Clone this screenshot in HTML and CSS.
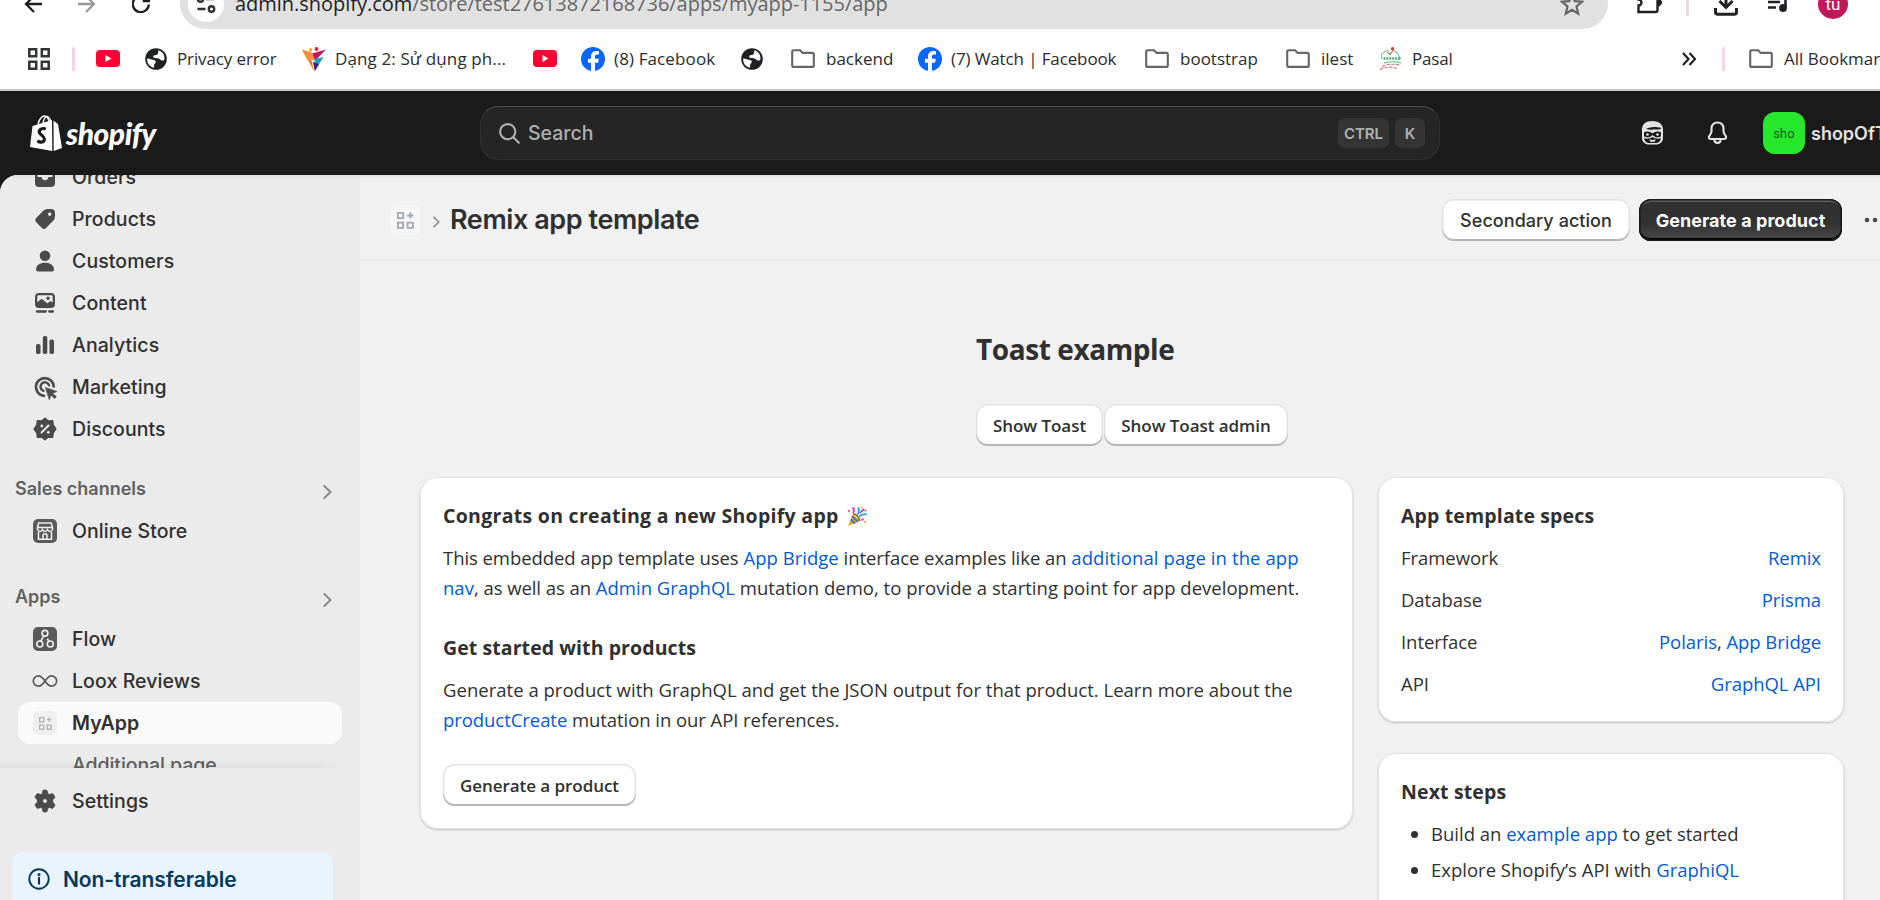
FILE: index.html
```html
<!DOCTYPE html>
<html lang="en">
<head>
<meta charset="utf-8">
<title>Remix app template</title>
<link rel="stylesheet" href="styles.css">
</head>
<body>
<svg class="defs" width="0" height="0">
  <symbol id="folder" viewBox="0 0 24 20"><path d="M2.9 1.2h6.2l2.6 2.7h9.6q1.5 0 1.500 1.500v11q0 1.500-1.500 1.500H2.700q-1.500 0-1.500-1.500V2.800q0-1.600 1.700-1.600z" fill="none" stroke="#666" stroke-width="2.100"/></symbol>
  <symbol id="youtube" viewBox="0 0 24 18"><rect width="24" height="17" rx="4" fill="#ff0033"/><path d="M9.500 5v7l6-3.500z" fill="#fff"/></symbol>
  <symbol id="facebook" viewBox="0 0 24 24"><circle cx="12" cy="12" r="12" fill="#0866ff"/><path d="M10 24v-8.200H7v-4h3V10c0-4 2-6 5.500-6 1 0 1.700.1 2.500.3v3.400c-.6-.1-1.100-.1-1.800-.1-1.600 0-2.200.7-2.200 2.200v2h3.800l-.7 4H14V24z" fill="#fff"/></symbol>
  <symbol id="globe" viewBox="0 0 22 22"><circle cx="11" cy="11" r="9.800" fill="#202124" stroke="#202124" stroke-width="2"/><path d="M2.200 10.500c2.800 0 3.800 1.500 6 1.200 2.600.3 3 2 2.200 3.300-.8.800-1.300 1-1.400 4.800C4.500 18.800 1.800 15 2.200 10.500zM13.500 2.300c3.500 1 6.200 4.500 6 8.300-.2 1.400-.7 2-1.800 2-1.500.2-2.500-1.500-4.200-2.200-1.600-.4-4 .2-5-.8-1-1.500.5-2.800 2-2.700 1.800.2 2.600-1 2.600-2.400z" fill="#fff"/></symbol>
  <symbol id="appgrid" viewBox="0 0 16 16"><path d="M.8.8h5v5h-5zM.8 10h5v5h-5zM10 10h5v5h-5zM12.500.5v5.600M9.700 3.300h5.600" fill="none" stroke="currentColor" stroke-width="1.700"/></symbol>
  <symbol id="chev" viewBox="0 0 9 14"><path d="M1.300 1 7.500 7l-6.200 6" fill="none" stroke="currentColor" stroke-width="2" stroke-linecap="round" stroke-linejoin="round"/></symbol>
</svg>

<div class="browser">
  <div class="toolbar">
    <svg class="nav-icon" viewBox="0 0 18 18"><path d="M18 9H2M10 1 2 9l8 8" fill="none" stroke="#202124" stroke-width="2.300"/></svg>
    <svg class="nav-icon nav-forward" viewBox="0 0 18 18"><path d="M0 9h16M8 1l8 8-8 8" fill="none" stroke="#9a9a9a" stroke-width="2.300"/></svg>
    <svg class="nav-icon nav-reload" viewBox="0 0 18 18"><path d="M16.800 9.500A8 8 0 1 1 14.500 3.500M17.200 0v6.200h-6.500" fill="none" stroke="#202124" stroke-width="2.300"/></svg>
    <div class="omnibox">
      <div class="site-info"><svg width="20" height="20" viewBox="0 0 20 20" fill="none" stroke="#303030" stroke-width="2.400"><circle cx="4.500" cy="5" r="2.700"/><path d="M10 5h8M1.500 15h8"/><circle cx="15.500" cy="15" r="2.700"/></svg></div>
      <div class="url"><span class="host">admin.shopify.com</span>/store/test27613872168736/apps/myapp-1155/app</div>
      <svg class="star" viewBox="0 0 24 24"><path d="m12 2.500 2.800 6.700 7.200.6-5.500 4.700 1.700 7.100-6.200-3.800-6.200 3.800 1.700-7.100L2 9.800l7.200-.6z" fill="none" stroke="#666" stroke-width="2.200"/></svg>
    </div>
    <svg class="tool-ext" viewBox="0 0 26 26"><path d="M2 4.500h6a3 3 0 0 1 6 0h6q1.500 0 1.500 1.500v5.500a3 3 0 0 1 0 6V22q0 2-2 2H2.500v-6.500a3 3 0 0 0 0-6z" fill="none" stroke="#202124" stroke-width="2.400"/><circle cx="23" cy="14.500" r="2.800" fill="#202124"/></svg>
    <span class="sep tool-sep"></span>
    <svg class="tool-dl" viewBox="0 0 24 24"><path d="M12 0v15M5.500 9l6.500 6.500L18.500 9" fill="none" stroke="#202124" stroke-width="3"/><path d="M1.500 16v4q0 2.300 2.300 2.300h16.400q2.300 0 2.300-2.300v-4" fill="none" stroke="#202124" stroke-width="3"/></svg>
    <svg class="tool-media" viewBox="0 0 22 22"><path d="M1 6.500h12M1 12h12M1 17.500h8M18.500 18V5h3" fill="none" stroke="#202124" stroke-width="2.600"/><circle cx="16" cy="18" r="3.900" fill="#202124"/></svg>
    <div class="profile">tu</div>
  </div>
  <div class="bookmarks">
    <svg class="bm-apps" viewBox="0 0 22 22"><path d="M1.300 1.300h6.900v6.900H1.300zM13.800 1.300h6.900v6.900h-6.900zM1.300 13.800h6.900v6.900H1.300zM13.800 13.800h6.900v6.900h-6.900z" fill="none" stroke="#333437" stroke-width="2.500"/></svg>
    <span class="sep bm-sep"></span>
    <svg class="bm-yt"><use href="#youtube"/></svg>
    <svg class="bm-globe"><use href="#globe"/></svg><span class="bm-text after-globe w-privacy">Privacy error</span>
    <svg class="bm-24" viewBox="0 0 24 24"><path d="M0 2.500 8 7l4 17z" fill="#f4742b"/><path d="M24 2.500 10 6.500 13 14z" fill="#c2185b"/><path d="m0 2.500 9.500 3L13 13 5.500 13z" fill="#fb8c3c"/><path d="m12.500 12 9-2-8.700 14z" fill="#1f9ec0"/><path d="m11 15 6 2-4.200 7z" fill="#4b1d6b"/><circle cx="8.500" cy="3" r="1.900" fill="#fbb03b"/><circle cx="14.500" cy="2" r="2" fill="#ee2244"/></svg><span class="bm-text w-dang">Dạng 2: Sử dụng ph...</span>
    <svg class="bm-yt flush"><use href="#youtube"/></svg>
    <svg class="bm-24 lead-24"><use href="#facebook"/></svg><span class="bm-text w-fb8">(8) Facebook</span>
    <svg class="bm-globe flush"><use href="#globe"/></svg>
    <svg class="bm-folder lead-28"><use href="#folder"/></svg><span class="bm-text after-folder w-backend">backend</span>
    <svg class="bm-24"><use href="#facebook"/></svg><span class="bm-text w-fb7">(7) Watch | Facebook</span>
    <svg class="bm-folder"><use href="#folder"/></svg><span class="bm-text after-folder w-bootstrap">bootstrap</span>
    <svg class="bm-folder"><use href="#folder"/></svg><span class="bm-text after-folder w-ilest">ilest</span>
    <svg class="bm-24" viewBox="0 0 24 24" fill="none"><path d="M2.500 12V7L8 3l3 4 3-4 4 3 4 6" stroke="#8cc5a0" stroke-width="1.200"/><path d="m8 5 3 3 3-4" stroke="#d66" stroke-width="1"/><circle cx="13.500" cy="1.800" r="1.700" fill="#e53935"/><path d="M4.500 11.500h16.500" stroke="#4dae72" stroke-width="2.600" stroke-dasharray="2 .9"/><path d="M5 16q9-2.500 17 0" stroke="#5fb880" stroke-width="1.200"/><path d="M3 19.500q8-3.500 18-1.500M1 22.500q8-4 17-1" stroke="#d08080" stroke-width="1.200" stroke-dasharray="3.500 1.200"/></svg><span class="bm-text w-pasal">Pasal</span>
    <svg class="bm-more" viewBox="0 0 14 14"><path d="m1 1 5.500 6L1 13M7.500 1 13 7l-5.500 6" fill="none" stroke="#202124" stroke-width="2.200"/></svg>
    <span class="sep all-sep"></span>
    <svg class="bm-folder lead-24"><use href="#folder"/></svg><span class="bm-text after-folder">All Bookmarks</span>
  </div>
</div>

<header class="topbar">
  <div class="logo">
    <svg width="32" height="36" viewBox="0 0 32 36"><path d="M2.500 11 22 5l.3 31L0 32z" fill="#fff"/><path d="M23.500 5.500 28 9l4 24-8.300 3z" fill="#fff"/><path d="M8 9.500C9 4 12 1 14.500 1S18.500 4 19 7M13 8C14 3 16 .8 18 1.800S20.500 5 20.800 6.500" fill="none" stroke="#fff" stroke-width="1.400"/><path d="M15.800 14.200c-3-1.600-6.600-.2-6.600 2.800 0 3.200 5.200 3.400 5.200 7 0 3.300-3.800 4.300-7 1.700" fill="none" stroke="#1a1a1a" stroke-width="3.200"/></svg>
    <span class="logo-text">shopify</span>
  </div>
  <div class="search">
    <svg width="21" height="21" viewBox="0 0 21 21"><circle cx="8.700" cy="8.700" r="7.600" fill="none" stroke="#b0b0b0" stroke-width="2.100"/><path d="m14.300 14.300 5.500 5.500" stroke="#b0b0b0" stroke-width="2.200" stroke-linecap="round"/></svg>
    <span class="search-text">Search</span>
    <kbd class="key-ctrl">CTRL</kbd><kbd class="key-k">K</kbd>
  </div>
  <svg class="mascot" viewBox="0 0 23 24"><path d="M1 11C0 3 5 0 11.500 0S23 3.500 22 11v6c0 4-3 6.500-7 6.500H8C4 23.500 1 21 1 17z" fill="#e3e3e3"/><path d="M5 7.800C7 6.500 9 6.800 11 6.200c3-.6 6-.2 9.500.8-1.500 2-5 1.700-7.500 1.200-2.500.9-5.500 1-8-.4z" fill="#1a1a1a"/><path d="M3 11.300c2.500-1.200 5.500-.9 8.500 1.200 3-2.100 6-2.400 8.500-1.200v3.600c-2.500 2.300-6 1.700-8.500-.9-2.500 2.600-6 3.200-8.500.9z" fill="#1a1a1a"/><circle cx="6.500" cy="13.500" r="1.300" fill="#e3e3e3"/><circle cx="16.500" cy="13.500" r="1.300" fill="#e3e3e3"/><path d="M3 17.300c3 .9 6 .3 8.500-1.300 2.500 1.600 5.500 2.200 8.500 1.300-.6 2.700-2 4.200-4.500 4.700h-8C5 21.500 3.600 20 3 17.300z" fill="#1a1a1a"/><path d="M8.300 18.300q3.200 1.600 6.400 0l-1 2.400H9.300z" fill="#e3e3e3"/></svg>
  <svg class="bell" viewBox="0 0 21 24"><path d="M10.500 1.500c-4 0-6 2.800-6 6v2.800c0 2-.8 2.800-1.900 4.200-1.400 1.800-.8 3.500 1 3.500h13.800c1.800 0 2.400-1.700 1-3.500-1.100-1.400-1.900-2.200-1.900-4.200V7.500c0-3.200-2-6-6-6z" fill="none" stroke="#e3e3e3" stroke-width="2.100"/><path d="M7.300 18.500c0 4.500 6.400 4.500 6.400 0" fill="none" stroke="#e3e3e3" stroke-width="2.100"/></svg>
  <div class="avatar">sho</div>
  <span class="shop-name">shopOfTu</span>
</header>

<div class="frame">
  <nav class="sidebar">
    <div class="nav-scroll">
      <div class="nav-item"><svg viewBox="0 0 30 30"><path d="M5 9q0-4 4-4h12q4 0 4 4v12q0 4-4 4H9q-4 0-4-4z" fill="#4a4a4a"/><path d="M7.500 8h15v7h-4q-.8 3.300-3.500 3.300T11.500 15h-4z" fill="#ebebeb"/></svg><span>Orders</span></div>
      <div class="nav-item"><svg viewBox="0 0 30 30"><path fill-rule="evenodd" d="M6 14.200 13.500 6.600Q15 5 17.500 5H21q4 0 4 4v3.500q0 2.500-1.600 4l-7.600 7.700q-1.800 1.600-3.600 0l-6.200-6.200q-1.700-1.900 0-3.800zM19.700 8.500a1.700 1.700 0 1 0 .01 0z" fill="#4a4a4a"/></svg><span>Products</span></div>
      <div class="nav-item"><svg viewBox="0 0 30 30" fill="#4a4a4a"><circle cx="15" cy="9.700" r="5.300"/><path d="M6 23.500c0-4 4-6.700 9-6.700s9 2.700 9 6.700q0 2-2 2H8q-2 0-2-2z"/></svg><span>Customers</span></div>
      <div class="nav-item"><svg viewBox="0 0 30 30"><rect x="5" y="5" width="20" height="15" rx="4" fill="#4a4a4a"/><path d="M7.300 8.500q0-1.300 1.500-1.300h12.400q1.500 0 1.500 1.300v6.300q-2-2.300-3.500-1L17.500 15.500 12.800 11.500q-1.300-1-2.500.3L7.300 14.300z" fill="#ebebeb"/><circle cx="18" cy="10.300" r="1.700" fill="#4a4a4a"/><path d="M7 23.500h8.800M19.200 23.500h3.800" stroke="#4a4a4a" stroke-width="2.300" stroke-linecap="round"/></svg><span>Content</span></div>
      <div class="nav-item"><svg viewBox="0 0 30 30" fill="#4a4a4a"><rect x="6" y="14" width="4.500" height="10" rx="1.700"/><rect x="12.800" y="6" width="4.500" height="18" rx="1.700"/><rect x="19.500" y="9.500" width="4.500" height="14.500" rx="1.700"/></svg><span>Analytics</span></div>
      <div class="nav-item"><svg viewBox="0 0 30 30" fill="none" stroke="#4a4a4a" stroke-width="2.700" stroke-linecap="round"><path d="M23.700 14.500A8.900 8.900 0 1 0 14 23.800"/><path d="M19 13.200A4.400 4.400 0 1 0 13.300 18.800" stroke-width="2.500"/><path d="m15.700 15.700 11 3.800-4.200 1.800 3.800 3.400-1.800 1.800-3.500-3.600-1.600 4.300z" fill="#4a4a4a" stroke-width=".8" stroke-linejoin="round"/></svg><span>Marketing</span></div>
      <div class="nav-item"><svg viewBox="0 0 30 30"><path d="m15 4.500 3.200 2.700 4.300-.3.500 4.200L25.700 15 23 18.700l-.5 4.400-4.300-.2L15 25.600l-3.200-2.700-4.300.2-.5-4.400L4.300 15 7 11.100l.5-4.200 4.300.3z" fill="#4a4a4a" stroke="#4a4a4a" stroke-width="1.800" stroke-linejoin="round"/><path d="m11.500 18.500 7-7" stroke="#ebebeb" stroke-width="2" stroke-linecap="round"/><circle cx="11.800" cy="12" r="1.400" fill="#ebebeb"/><circle cx="18.300" cy="18.300" r="1.400" fill="#ebebeb"/></svg><span>Discounts</span></div>
      <div class="nav-heading"><span>Sales channels</span><svg><use href="#chev"/></svg></div>
      <div class="nav-item"><svg viewBox="0 0 30 30"><rect x="3" y="3" width="24" height="24" rx="5" fill="#5a5a5a"/><path d="M8.500 16v7.200h13V16M7.500 11.500 8.700 7h12.600l1.200 4.500v2q-1 2-2.500 2t-2.500-2q-1 2-2.500 2t-2.500-2q-1 2-2.500 2t-2.500-2zM7.500 11.500h15M13 23v-4q0-1 1-1h2q1 0 1 1v4" fill="none" stroke="#f0f0f0" stroke-width="1.500"/></svg><span>Online Store</span></div>
      <div class="nav-heading"><span>Apps</span><svg><use href="#chev"/></svg></div>
      <div class="nav-item"><svg viewBox="0 0 30 30"><rect x="3" y="3" width="24" height="24" rx="5" fill="#5a5a5a"/><g fill="none" stroke="#f0f0f0" stroke-width="1.600"><circle cx="15" cy="9.300" r="2.900"/><circle cx="9.800" cy="20" r="3"/><circle cx="20.300" cy="20" r="3"/><path d="m13.500 12-2.600 5.200M17.300 14.800l1.700 2.600M11.300 17l-1.800-.2"/></g></svg><span>Flow</span></div>
      <div class="nav-item"><svg viewBox="0 0 30 30"><path d="M15 15c-2-3-3.700-5.200-6.500-5.200a5.200 5.200 0 0 0 0 10.400C11.300 20.200 13 18 15 15s3.700-5.200 6.500-5.200a5.200 5.200 0 0 1 0 10.400C18.700 20.200 17 18 15 15z" fill="none" stroke="#5a5a5a" stroke-width="1.700"/></svg><span>Loox Reviews</span></div>
      <div class="nav-item active"><span class="app-tile"><svg><use href="#appgrid"/></svg></span><span>MyApp</span></div>
      <div class="nav-item sub"><span>Additional page</span></div>
      <div class="scroll-shade"></div>
    </div>
    <div class="nav-item settings"><svg viewBox="0 0 30 30"><path fill-rule="evenodd" d="M12.800 5q.2-1 1.200-1h2q1 0 1.200 1l.6 2.700 1.500.8 2.600-.8q1-.3 1.500.6l1.300 2.200q.5.900-.3 1.600L22.700 13.900v2.200l1.700 1.800q.8.700.3 1.600l-1.300 2.200q-.5.900-1.500.6l-2.600-.8-1.500.8-.6 2.700q-.2 1-1.200 1h-2q-1 0-1.200-1l-.6-2.700-1.500-.8-2.600.8q-1 .3-1.500-.6l-1.300-2.200q-.5-.9.300-1.600L7.300 16.100v-2.200L5.600 12.100q-.8-.7-.3-1.600l1.300-2.200q.5-.9 1.500-.6l2.600.8 1.500-.8zM15 12.700a2.300 2.300 0 1 0 .01 0z" fill="#4a4a4a" stroke="#4a4a4a" stroke-width=".8"/></svg><span>Settings</span></div>
    <div class="notice"><svg width="22" height="22" viewBox="0 0 22 22"><circle cx="11" cy="11" r="9.700" fill="none" stroke="#00395c" stroke-width="1.900"/><path d="M11 9.800v6" stroke="#00395c" stroke-width="2.100" stroke-linecap="round"/><circle cx="11" cy="6.400" r="1.500" fill="#00395c"/></svg><span>Non-transferable</span></div>
  </nav>

  <main class="content">
    <div class="title-bar">
      <span class="title-tile"><svg><use href="#appgrid"/></svg></span>
      <svg class="crumb"><use href="#chev"/></svg>
      <h1>Remix app template</h1>
      <button class="btn inter secondary">Secondary action</button>
      <button class="btn inter primary">Generate a product</button>
      <svg class="dots" viewBox="0 0 22 6" fill="#4a4a4a"><circle cx="3" cy="3" r="2.300"/><circle cx="11" cy="3" r="2.300"/><circle cx="19" cy="3" r="2.300"/></svg>
    </div>
    <section class="toast">
      <h2>Toast example</h2>
      <div class="toast-actions"><button class="btn show">Show Toast</button><button class="btn show-admin">Show Toast admin</button></div>
    </section>
    <div class="layout">
      <article class="card main-card">
        <h3>Congrats on creating a new Shopify app <svg class="popper" viewBox="0 0 21 21"><path d="M1 20 6 8l7 7z" fill="#f5a623"/><path d="m3.700 13.500 4.500 4M5 10.300l6 5.500" stroke="#3b6fc4" stroke-width="1.700"/><path d="M6 8q4-1 7 7" fill="none" stroke="#8a5a2b" stroke-width="1.500"/><path d="M10.500 8.500Q13 5 11 1.500" stroke="#3d8de0" stroke-width="1.800" fill="none"/><path d="M6 7Q8 4 5.500 1.500" stroke="#f0369b" stroke-width="1.800" fill="none"/><path d="M12 10.500q3-3 8-2" stroke="#35a7e8" stroke-width="1.800" fill="none"/><path d="m13 7 4-4" stroke="#5b4fc7" stroke-width="1.600"/><g fill="#e8408c"><circle cx="2" cy="5" r="1.100"/><circle cx="18.500" cy="4.500" r="1.100"/><circle cx="15.500" cy="13.500" r="1.200"/></g><g fill="#f5a623"><circle cx="14.500" cy="1.500" r="1"/><circle cx="18" cy="16" r="1.100"/></g></svg></h3>
        <p><span class="tight">This embedded app template uses</span> <a>App Bridge</a> <span class="tight">interface examples like an</span> <a class="loose">additional page in the app</a><br><a>nav</a><span class="tight">, as well as an</span> <a>Admin GraphQL</a> mutation demo, to provide a starting point for app development.</p>
        <h3 class="second">Get started with products</h3>
        <p>Generate a product with GraphQL and get the JSON output for that product. Learn more about the<br><span class="tight"><a>productCreate</a> mutation in our API references.</span></p>
        <button class="btn generate">Generate a product</button>
      </article>
      <div class="side">
        <article class="card specs">
          <h3>App template specs</h3>
          <div class="row"><span>Framework</span><a>Remix</a></div>
          <div class="row"><span>Database</span><a>Prisma</a></div>
          <div class="row"><span>Interface</span><span><a>Polaris</a>, <a>App Bridge</a></span></div>
          <div class="row"><span>API</span><a>GraphQL API</a></div>
        </article>
        <article class="card next">
          <h3>Next steps</h3>
          <ul>
            <li>Build an <a>example app</a> to get started</li>
            <li>Explore Shopify’s API with <a>GraphiQL</a></li>
          </ul>
        </article>
      </div>
    </div>
  </main>
</div>
</body>
</html>
```
FILE: styles.css
```css
* { box-sizing: border-box; }
html, body { height: 900px; overflow: hidden; }
body {
  margin: 0;
  display: flex;
  flex-direction: column;
  background: #1a1a1a;
  color: #303030;
  font-family: "Open Sans", "Noto Sans", sans-serif;
}
svg { flex: none; display: block; }
.defs { position: absolute; }
h1, h2, h3, p, ul { margin: 0; }

/* Browser chrome */
.browser {
  flex: none;
  height: 91px;
  background: #fff;
  border-bottom: 2px solid #c7c9cc;
  overflow: hidden;
}
.toolbar {
  display: flex;
  align-items: center;
  height: 51px;
  margin-top: -22px;
  padding-left: 24px;
}
.nav-icon { width: 18px; height: 18px; }
.nav-forward { margin-left: 36px; }
.nav-reload { margin-left: 36px; }
.omnibox {
  display: flex;
  align-items: center;
  width: 1428px;
  height: 51px;
  margin-left: 30px;
  padding: 0 24px 0 8px;
  border-radius: 26px;
  background: #e1e1e1;
}
.site-info {
  display: flex;
  align-items: center;
  justify-content: center;
  width: 36px;
  height: 36px;
  border-radius: 50%;
  background: #fff;
}
.url {
  flex: 1;
  margin-left: 11px;
  font-size: 20px;
  letter-spacing: -.03px;
  color: #666;
  white-space: nowrap;
}
.host { color: #1f1f1f; }
.star { width: 24px; height: 24px; }
.sep { flex: none; width: 3px; height: 24px; border-radius: 2px; background: #f8d3e4; }
.tool-ext { width: 26px; height: 26px; margin: -6px 0 0 28px; }
.tool-sep { margin-left: 24px; }
.tool-dl { width: 24px; height: 24px; margin-left: 25px; }
.tool-media { width: 22px; height: 22px; margin: -6px 0 0 29px; }
.profile {
  display: flex;
  align-items: center;
  justify-content: center;
  width: 30px;
  height: 30px;
  margin-left: 29px;
  border-radius: 50%;
  background: #c2185b;
  color: #fff;
  font: 17px Roboto, sans-serif;
}
.bookmarks {
  display: flex;
  align-items: center;
  height: 60px;
  padding-left: 28px;
}
.bm-apps { width: 22px; height: 22px; }
.bm-sep { margin-left: 22px; }
.bm-yt { width: 24px; height: 18px; margin-left: 21px; }
.bm-globe { width: 22px; height: 22px; margin-left: 25px; }
.bm-24 { width: 24px; height: 24px; }
.bm-folder { width: 24px; height: 20px; }
.bm-text {
  flex: none;
  padding: 0 0 2px 9px;
  font-size: 17px;
  color: #2b2b2e;
  white-space: nowrap;
}
.bm-text.after-folder { padding-left: 11px; }
.bm-text.after-globe { padding-left: 10px; }
.flush { margin-left: 0; }
.lead-24 { margin-left: 24px; }
.lead-28 { margin-left: 28px; }
.w-privacy { width: 135px; letter-spacing: -.12px; }
.w-dang { width: 207px; letter-spacing: .12px; }
.w-fb8 { width: 136px; letter-spacing: .12px; }
.w-backend { width: 103px; }
.w-fb7 { width: 203px; letter-spacing: -.12px; }
.w-bootstrap { width: 117px; }
.w-ilest { width: 69px; }
.w-pasal { width: 51px; letter-spacing: -.2px; }
.bm-more { width: 14px; height: 14px; margin-left: 228px; }
.all-sep { margin-left: 26px; }

/* Admin top bar */
.topbar {
  flex: none;
  display: flex;
  align-items: center;
  height: 84px;
  padding-left: 30px;
  background: #1a1a1a;
  font-family: Inter, sans-serif;
}
.logo { flex: none; display: flex; align-items: center; width: 450px; color: #fff; }
.logo-text {
  margin-left: 4px;
  font: italic 900 30px/34px Lato, sans-serif;
  letter-spacing: -.5px;
}
.search {
  flex: none;
  display: flex;
  align-items: center;
  width: 960px;
  height: 54px;
  padding: 0 14px 0 18px;
  border: 1px solid #303030;
  border-top-color: #4a4a4a;
  border-radius: 18px;
  background: #252525;
}
.search-text { flex: 1; margin-left: 8px; font-size: 19.5px; font-weight: 450; color: #b0b0b0; }
kbd {
  display: flex;
  align-items: center;
  justify-content: center;
  height: 30px;
  border-radius: 7px;
  background: #343434;
  color: #b0b0b0;
  font: 600 15px Inter, sans-serif;
}
.key-ctrl { width: 51px; }
.key-k { width: 30px; margin-left: 6px; }
.mascot { width: 23px; height: 24px; margin-left: 201px; }
.bell { width: 21px; height: 24px; margin-left: 43px; }
.avatar {
  flex: none;
  display: flex;
  align-items: center;
  justify-content: center;
  width: 42px;
  height: 42px;
  margin-left: 35px;
  border-radius: 12px;
  background: #25e82b;
  color: #0b5a12;
  font-size: 12.500px;
}
.shop-name { flex: none; margin-left: 6px; font-size: 18px; font-weight: 600; color: #e3e3e3; }

/* Frame */
.frame {
  flex: 1;
  display: flex;
  min-height: 0;
  border-top-left-radius: 18px;
  overflow: hidden;
  background: linear-gradient(#dedede, #f1f1f1 4px);
}
.sidebar {
  flex: none;
  display: flex;
  flex-direction: column;
  width: 360px;
  background: linear-gradient(#dedede, #ebebeb 4px);
  font-family: Inter, sans-serif;
}
.nav-scroll { position: relative; flex: none; height: 593px; overflow: hidden; }
.nav-scroll > .nav-item:first-child { margin-top: -19px; }
.nav-item {
  display: flex;
  align-items: center;
  height: 42px;
  margin: 0 18px;
  padding-left: 12px;
  border-radius: 12px;
  font-size: 19.500px;
  font-weight: 550;
  letter-spacing: .08px;
}
.nav-item > svg { width: 30px; height: 30px; margin-right: 12px; }
.nav-heading {
  display: flex;
  align-items: center;
  justify-content: space-between;
  height: 42px;
  margin-top: 18px;
  padding: 0 28px 0 15px;
  color: #616161;
  font-size: 18px;
  font-weight: 600;
}
.nav-heading > span { padding-bottom: 1px; }
.nav-heading ~ .nav-heading { margin-top: 24px; }
.nav-heading svg { width: 9px; height: 14px; margin-top: 6px; color: #8a8a8a; }
.nav-item.active { background: #fafafa; font-weight: 600; }
.app-tile {
  display: flex;
  align-items: center;
  justify-content: center;
  width: 24px;
  height: 24px;
  margin: 0 15px 0 3px;
  border-radius: 5px;
  background: #efefef;
  color: #b5b5b5;
}
.app-tile svg { width: 13px; height: 13px; }
.nav-item.sub { padding-left: 54px; font-weight: 450; letter-spacing: -.08px; color: #616161; }
.scroll-shade {
  position: absolute;
  left: 0;
  bottom: 0;
  width: 342px;
  height: 9px;
  background: linear-gradient(rgba(0,0,0,0), rgba(0,0,0,.045));
  -webkit-mask-image: linear-gradient(90deg, #000 92%, transparent);
  mask-image: linear-gradient(90deg, #000 92%, transparent);
}
.settings { flex: none; margin-top: 12px; }
.notice {
  flex: none;
  display: flex;
  align-items: center;
  gap: 13px;
  width: 321px;
  height: 66px;
  margin: 30px 0 0 12px;
  padding: 0 16px 12px;
  border-radius: 12px;
  background: #eaf4ff;
  color: #00395c;
  font-size: 21px;
  font-weight: 600;
  letter-spacing: -.07px;
}

/* Content */
.content { flex: 1; min-width: 0; overflow: hidden; }
.title-bar {
  display: flex;
  align-items: center;
  height: 85px;
  padding: 6px 0 0 30px;
  border-bottom: 1px solid #e8e8e8;
}
.title-tile {
  flex: none;
  display: flex;
  align-items: center;
  justify-content: center;
  width: 30px;
  height: 30px;
  border-radius: 6px;
  background: #f6f6f7;
  color: #a0a8b5;
}
.title-tile svg { width: 17px; height: 17px; }
.crumb { width: 7px; height: 12px; margin: 3px 10px 0 13px; color: #8a8a8a; }
h1 { flex: none; width: 992px; font: 600 27px/36px Inter, sans-serif; letter-spacing: -.42px; white-space: nowrap; }
.btn {
  flex: none;
  height: 42px;
  padding: 0;
  border: 0;
  border-radius: 12px;
  background: #fff;
  color: #303030;
  font: 600 17px "Open Sans", sans-serif;
  letter-spacing: -.05px;
  box-shadow: inset 0 -2px 0 #b5b5b5, inset 0 0 0 1.500px #e3e3e3;
}
.btn.inter { font: 550 18px Inter, sans-serif; letter-spacing: .05px; }
.secondary { width: 188px; }
.btn.primary {
  width: 203px;
  margin-left: 9px;
  background: linear-gradient(#303030 55%, #4a4a4a);
  color: #fff;
  font-weight: 650;
  box-shadow: inset 0 0 0 1.500px #1a1a1a, inset 0 -3px 0 #000, inset 0 3px 0 #5c5c5c;
}
.dots { width: 22px; height: 6px; margin-left: 22px; }

.toast { width: 312px; margin: 71px 0 0 616px; }
h2 { font-size: 28px; line-height: 36px; letter-spacing: -.42px; }
.toast-actions { display: flex; gap: 1px; margin-top: 37px; }
.show { width: 127px; }
.show-admin { width: 184px; }

.layout { display: flex; align-items: flex-start; gap: 25px; margin: 31px 0 0 61px; }
.card {
  border-radius: 18px;
  background: #fff;
  padding: 24px 23px 23px;
  box-shadow: 0 1px 2px #bbb, inset 0 0 0 1px #e3e3e3;
}
.main-card { flex: none; width: 933px; height: 352px; margin-left: -1px; }
h3 { display: flex; align-items: center; font-size: 19.500px; line-height: 30px; letter-spacing: .29px; white-space: pre; }
.popper { width: 21px; height: 21px; margin-left: 3px; }
p, ul, .row { font-size: 18.500px; line-height: 30px; white-space: nowrap; }
p { margin-top: 12px; letter-spacing: .02px; }
.tight { letter-spacing: -.06px; }
.loose { letter-spacing: .1px; }
h3.second { margin-top: 30px; letter-spacing: .08px; }
.generate { width: 193px; margin-top: 29px; }
a { color: #005bd3; }
.side { flex: none; width: 466px; }
.side h3 { letter-spacing: .14px; }
.row { display: flex; justify-content: space-between; margin-top: 12px; letter-spacing: -.05px; }
.specs { height: 245px; }
.next { height: 200px; margin-top: 31px; }
ul { padding-left: 30px; margin-top: 12px; list-style: none; }
li { display: block; }
li + li { margin-top: 6px; }
li::before {
  content: "";
  display: inline-block;
  width: 7px;
  height: 7px;
  margin: 0 13px 3px -20px;
  border-radius: 50%;
  background: #303030;
}
```
